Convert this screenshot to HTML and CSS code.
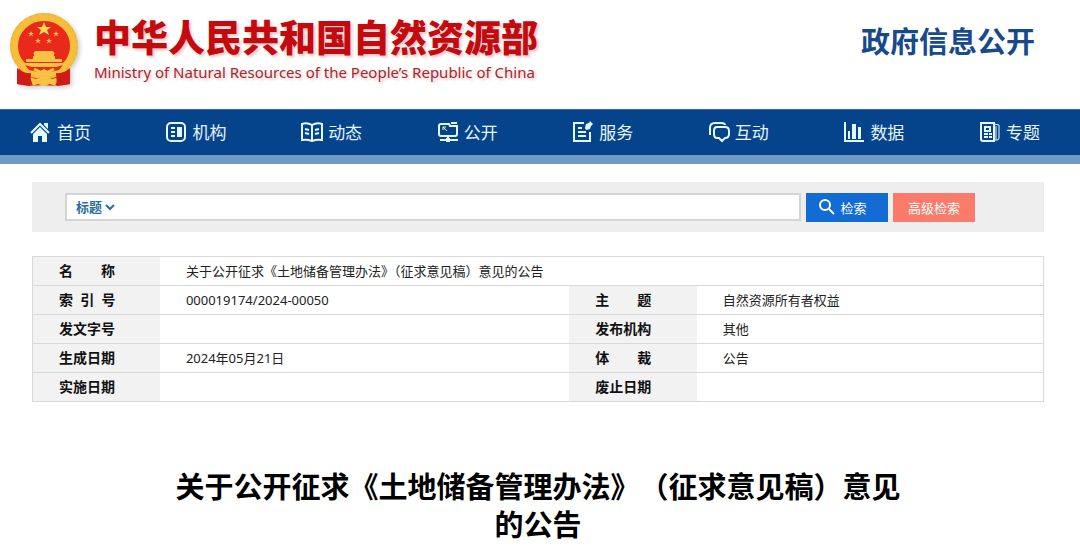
FILE: index.html
```html
<!DOCTYPE html>
<html lang="zh-CN">
	<head>
		<meta charset="utf-8">
		<title>中华人民共和国自然资源部 - 政府信息公开</title>
		<meta name="viewport" content="width=device-width, initial-scale=1">
		<link rel="stylesheet" href="styles.css">
	</head>
	<body>
		<header class="header">
			<a class="brand" href="#">
				<!-- national emblem -->
				<svg class="emblem" width="72" height="76" viewBox="0 0 72 76" aria-hidden="true">
					<path d="M12 54L10 72Q22 75 36 73Q50 75 63 72L61 54Z" fill="#d8201c"/>
					<ellipse cx="37" cy="34" rx="30" ry="29" fill="#e9291b" stroke="#f5bf3c" stroke-width="8"/>
					<ellipse cx="37" cy="34" rx="33" ry="32" fill="none" stroke="#e8ad35" stroke-width="1" stroke-dasharray="3 3"/>
					<path d="M37 10l2 5h5l-4 3 2 5-5-3-5 3 2-5-4-3h5z" fill="#fadc55"/>
					<g fill="#f6c344">
						<path id="star" d="M24 19l.8 2h2.1l-1.700 1.300.7 2.100-1.900-1.300-1.900 1.300.7-2.100-1.700-1.300h2.100z"/>
						<use href="#star" x="25"/>
						<use href="#star" x="7" y="7"/>
						<use href="#star" x="18" y="7"/>
						<path d="M28 39h18l2 3H26zM27 42h20v2h1v3H26v-3h1zM19 47h36v3H19zM16 51h42v4H16z"/>
						<path d="M31 58l6-2 6 2 4 3-4 4-6-3-6 3-4-4zM23 65l6 2 8-3 8 3 7-2-4 9-5-2-6 2-6-2-5 2z"/>
					</g>
					<path d="M18 53q10 4 19 3 9 1 19-3l-4 5-9 2-6-3-6 3-9-2z" fill="#e9291b"/>
					<path d="M27 57l10 5 10-5" fill="none" stroke="#f6c344" stroke-width="3"/>
					<path d="M10 56q6 6 14 5l-1 13-13-2zM63 56q-6 6-14 5l1 13 13-2z" fill="#cf1b18"/>
				</svg>
				<span class="brand-text">
					<span class="brand-name">中华人民共和国自然资源部</span>
					<span class="brand-sub">Ministry of Natural Resources of the People’s Republic of China</span>
				</span>
			</a>
			<div class="channel">政府信息公开</div>
		</header>

		<nav class="nav">
			<a href="#">
				<svg class="icon" viewBox="0 0 22 22"><path d="M1 12l9-9 9 9"/><path d="M14 2h4v6l-4-4z" class="solid"/><path d="M3 13l7-7 7 7v8h-5v-6H8v6H3z" class="solid"/></svg>
				首页
			</a>
			<a href="#">
				<svg class="icon" viewBox="0 0 22 22"><rect x="1" y="2" width="18" height="18" rx="4"/><path d="M5 7h4M5 11h4M5 15h4"/><path d="M11 6h5v10h-5z" class="solid"/></svg>
				机构
			</a>
			<a href="#">
				<svg class="icon" viewBox="0 0 22 22"><path d="M11 4Q6 1 1 3v16q5-1 10 1 5-2 10-1V3q-5-2-10 1v16M4 8l4 1M4 12l4 1M18 8l-4 1M18 12l-4 1"/></svg>
				动态
			</a>
			<a href="#">
				<svg class="icon" viewBox="0 0 22 22"><path d="M12 3H4Q2 3 2 5v8q0 2 2 2h14q2 0 2-2V5h-7zM14 2h6M11 15v4M3 19h18"/><path d="M6 6l4 4M6 9V6h3" class="fine"/><path d="M9 17h4v4H9z" class="solid"/></svg>
				公开
			</a>
			<a href="#">
				<svg class="icon" viewBox="0 0 22 22"><path d="M12 2H2v18h16v-9M6 7h4M6 11h8M6 15h8"/><path d="M13 7l1-4 3-1 1-2 3 3-2 2-1 3-4 1z" class="solid"/></svg>
				服务
			</a>
			<a href="#">
				<svg class="icon" viewBox="0 0 22 22"><path d="M2 14V7q0-5 5-5h6q4 0 4 2"/><path d="M9 6h8q4 0 4 4v3q0 4-4 4l-3 3-3-3H9q-3 0-3-4v-3q0-4 3-4z"/></svg>
				互动
			</a>
			<a href="#">
				<svg class="icon" viewBox="0 0 22 22"><path d="M2 1v19h19"/><path d="M9 3h4v15H9zM5 10h2v8H5zM15 6h3v12h-3z" class="solid"/></svg>
				数据
			</a>
			<a href="#">
				<svg class="icon" viewBox="0 0 22 22"><path d="M2 2h13v18H4q-2 0-2-2z"/><path d="M15 3l5 1v13q0 2-2 2h-3M17 5v14" class="fine"/><path d="M6 6h5v4H6z"/><path d="M5 13h4M5 16h4M10 13h3M10 16h3"/></svg>
				专题
			</a>
		</nav>

		<main class="main">
			<form class="search">
				<div class="search-box">
					<label class="field">
						<select aria-label="检索范围">
							<option>标题</option>
							<option>正文</option>
						</select>
						<svg class="caret" viewBox="0 0 10 8" aria-hidden="true"><path d="M1 2l4 4 4-4"/></svg>
					</label>
					<input type="text" aria-label="检索词">
				</div>
				<button class="btn btn-search" type="submit">
					<svg class="lens" viewBox="0 0 16 16" aria-hidden="true"><circle cx="6" cy="6" r="5"/><path d="M10 10l5 5"/></svg>
					检索
				</button>
				<button class="btn btn-advanced" type="button">高级检索</button>
			</form>

			<table class="info">
				<colgroup>
					<col class="col-label">
					<col class="col-wide">
					<col class="col-label">
					<col>
				</colgroup>
				<tr>
					<th scope="row">名　　称</th>
					<td colspan="3">关于公开征求《土地储备管理办法》（征求意见稿）意见的公告</td>
				</tr>
				<tr>
					<th scope="row">索&nbsp;&nbsp;引&nbsp;&nbsp;号</th>
					<td>000019174/2024-00050</td>
					<th scope="row">主　　题</th>
					<td>自然资源所有者权益</td>
				</tr>
				<tr>
					<th scope="row">发文字号</th>
					<td></td>
					<th scope="row">发布机构</th>
					<td>其他</td>
				</tr>
				<tr>
					<th scope="row">生成日期</th>
					<td>2024年05月21日</td>
					<th scope="row">体　　裁</th>
					<td>公告</td>
				</tr>
				<tr>
					<th scope="row">实施日期</th>
					<td></td>
					<th scope="row">废止日期</th>
					<td></td>
				</tr>
			</table>

			<h1 class="title">关于公开征求《土地储备管理办法》（征求意见稿）意见的公告</h1>
		</main>
	</body>
</html>
```
FILE: styles.css
```css
* {
	box-sizing: border-box;
}
body {
	margin: 0;
	background: #ffffff;
	font-family: "Noto Sans", "Noto Sans CJK SC", sans-serif;
	font-size: 13px;
	color: #222222;
}
a {
	color: inherit;
	text-decoration: none;
}

/* header */
.header {
	display: flex;
	justify-content: space-between;
	align-items: flex-start;
	height: 109px;
	padding: 12px 45px 0 7px;
}
.brand {
	display: flex;
	gap: 15px;
}
.emblem {
	filter: drop-shadow(2px 2px 2px #cccccc);
}
.brand-text {
	display: flex;
	flex-direction: column;
	text-shadow: 2px 2px 3px #e0c4c4;
	white-space: nowrap;
}
.brand-name {
	font-family: "Noto Sans CJK SC", sans-serif;
	font-size: 37px;
	font-weight: 900;
	line-height: 48px;
	color: #c4090f;
}
.brand-sub {
	font-size: 15px;
	line-height: 24px;
	color: #ab2329;
}
.channel {
	font-size: 29px;
	font-weight: bold;
	line-height: 60px;
	color: #174a8c;
}

/* navigation */
.nav {
	display: flex;
	justify-content: space-between;
	height: 55px;
	padding: 0 40px 2px 30px;
	background: #05438b;
	border-top: 1px solid #32699e;
	border-bottom: 9px solid #7199c4;
}
.nav a {
	display: flex;
	align-items: center;
	gap: 5px;
	font-size: 17px;
	color: #e6f4ff;
}
.icon {
	width: 22px;
	height: 22px;
	fill: none;
	stroke: #e6f8ff;
	stroke-width: 2;
}
.icon .fine {
	stroke-width: 1;
}
.icon .solid {
	fill: #e6f8ff;
	stroke: none;
}

.main {
	padding: 18px 36px 0 32px;
}

/* search */
.search {
	display: flex;
	align-items: center;
	gap: 5px;
	height: 50px;
	padding: 0 69px 0 33px;
	background: #eeeeee;
}
.search-box {
	display: flex;
	flex: 1;
	height: 28px;
	background: #ffffff;
	border: 2px solid #d4d4d4;
}
.field {
	display: flex;
	align-items: center;
	padding-left: 9px;
}
.field select {
	appearance: none;
	padding: 0;
	border: 0;
	background: none;
	font-family: inherit;
	font-size: 13px;
	font-weight: bold;
	color: #2a6e9f;
}
.caret {
	width: 10px;
	height: 8px;
	margin-left: 2px;
	fill: none;
	stroke: #2a6e9f;
	stroke-width: 2;
}
.search-box input {
	flex: 1;
	min-width: 0;
	border: 0;
	outline: 0;
	background: none;
	font: inherit;
}
.btn {
	display: flex;
	align-items: center;
	justify-content: center;
	gap: 5px;
	width: 82px;
	height: 29px;
	padding: 0;
	border: 0;
	font-family: inherit;
	font-size: 13px;
	color: #ffffff;
	cursor: pointer;
}
.btn-search {
	padding-right: 8px;
	background: #126cd3;
}
.btn-advanced {
	background: #fb7b6b;
}
.lens {
	width: 16px;
	height: 16px;
	fill: none;
	stroke: #ffffff;
	stroke-width: 2;
}

/* document info */
.info {
	width: 100%;
	margin-top: 24px;
	table-layout: fixed;
	border-collapse: collapse;
	border: 1px solid #d9d9d9;
}
.col-label {
	width: 12.6%;
}
.col-wide {
	width: 40.5%;
}
.info tr {
	height: 29px;
	border-bottom: 1px solid #d9d9d9;
}
.info th,
.info td {
	padding: 0 0 0 26px;
	line-height: 20px;
	text-align: left;
}
.info th {
	background: #f2f2f2;
	font-size: 14px;
	color: #111111;
}

.title {
	max-width: 730px;
	margin: 66px auto 0;
	font-size: 29px;
	line-height: 38px;
	text-align: center;
	text-spacing-trim: space-all;
	color: #000000;
}
```
